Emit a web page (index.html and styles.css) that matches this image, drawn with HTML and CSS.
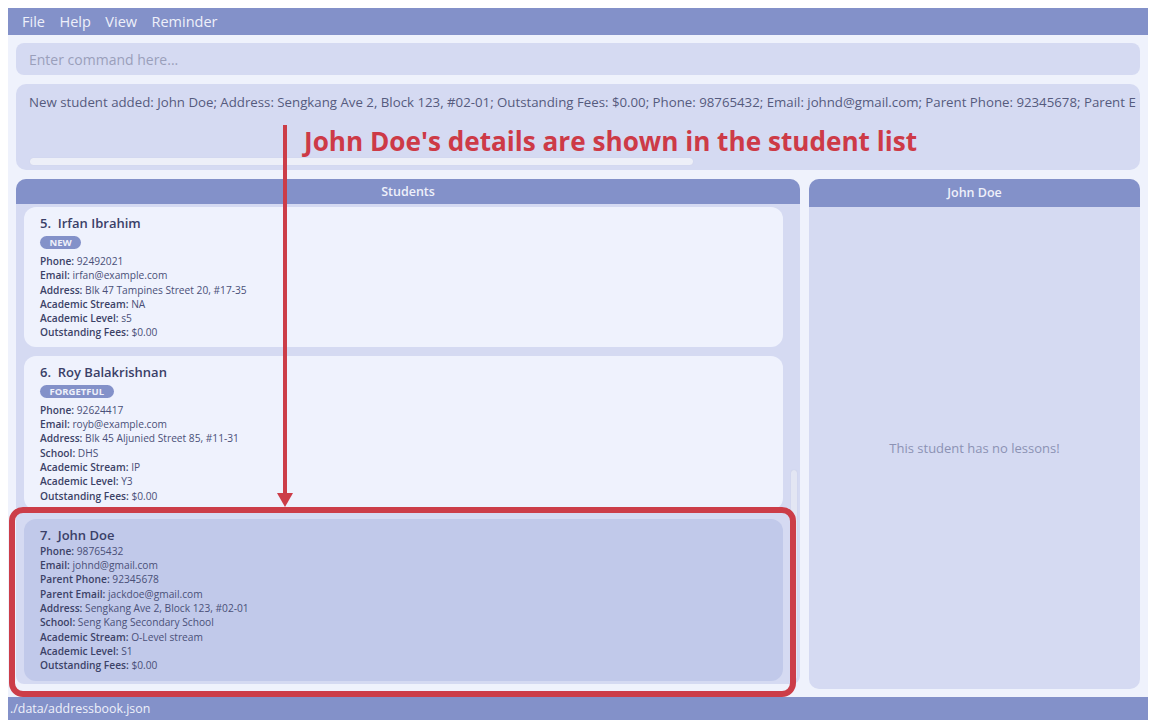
FILE: index.html
```html
<!DOCTYPE html>
<html>
<head>
<meta charset="utf-8">
<link rel="stylesheet" href="styles.css">
</head>
<body>
<div class="app">
  <div class="menubar">
    <span class="menu-item">File</span>
    <span class="menu-item">Help</span>
    <span class="menu-item">View</span>
    <span class="menu-item">Reminder</span>
  </div>
  <div class="main">
    <div class="command">Enter command here...</div>
    <div class="result">
      <div class="result-text">New student added: John Doe; Address: Sengkang Ave 2, Block 123, #02-01; Outstanding Fees: $0.00; Phone: 98765432; Email: johnd@gmail.com; Parent Phone: 92345678; Parent Email: jackdoe@gmail.com</div>
      <div class="hscroll"></div>
    </div>
    <div class="panels">
      <div class="panel students">
        <div class="panel-head">Students</div>
        <div class="list-body">
          <div class="cards">
            <div class="card">
              <div class="card-title">5.&nbsp; Irfan Ibrahim</div>
              <div class="tags"><span class="tag">NEW</span></div>
              <div class="fields">
                <div><b>Phone:</b> 92492021</div>
                <div><b>Email:</b> irfan@example.com</div>
                <div><b>Address:</b> Blk 47 Tampines Street 20, #17-35</div>
                <div><b>Academic Stream:</b> NA</div>
                <div><b>Academic Level:</b> s5</div>
                <div><b>Outstanding Fees:</b> $0.00</div>
              </div>
            </div>
            <div class="card">
              <div class="card-title">6.&nbsp; Roy Balakrishnan</div>
              <div class="tags"><span class="tag">FORGETFUL</span></div>
              <div class="fields">
                <div><b>Phone:</b> 92624417</div>
                <div><b>Email:</b> royb@example.com</div>
                <div><b>Address:</b> Blk 45 Aljunied Street 85, #11-31</div>
                <div><b>School:</b> DHS</div>
                <div><b>Academic Stream:</b> IP</div>
                <div><b>Academic Level:</b> Y3</div>
                <div><b>Outstanding Fees:</b> $0.00</div>
              </div>
            </div>
            <div class="card selected">
              <div class="card-title">7.&nbsp; John Doe</div>
              <div class="fields">
                <div><b>Phone:</b> 98765432</div>
                <div><b>Email:</b> johnd@gmail.com</div>
                <div><b>Parent Phone:</b> 92345678</div>
                <div><b>Parent Email:</b> jackdoe@gmail.com</div>
                <div><b>Address:</b> Sengkang Ave 2, Block 123, #02-01</div>
                <div><b>School:</b> Seng Kang Secondary School</div>
                <div><b>Academic Stream:</b> O-Level stream</div>
                <div><b>Academic Level:</b> S1</div>
                <div><b>Outstanding Fees:</b> $0.00</div>
              </div>
            </div>
          </div>
          <div class="vscroll"><div class="vthumb"></div></div>
        </div>
      </div>
      <div class="panel detail">
        <div class="panel-head detail-head">John Doe</div>
        <div class="detail-body">This student has no lessons!</div>
      </div>
    </div>
  </div>
  <div class="statusbar">./data/addressbook.json</div>
</div>

<div class="anno-box"></div>
<svg class="anno-arrow" width="20" height="390" viewBox="0 0 20 390">
  <rect x="8" y="0" width="4" height="370" fill="#cc3d48"/>
  <polygon points="2,368 18,368 10,382" fill="#cc3d48"/>
</svg>
<div class="anno-text">John Doe's details are shown in the student list</div>
</body>
</html>
```

FILE: styles.css
```css
* { box-sizing: border-box; }
html, body { margin: 0; padding: 0; }
body {
  background: #ffffff;
  padding: 8px;
  width: 1156px;
  height: 728px;
  font-family: "Open Sans", "Noto Sans", sans-serif;
  position: relative;
  overflow: hidden;
}
.app {
  width: 1140px;
  height: 712px;
  background: #eff2fc;
  display: flex;
  flex-direction: column;
}
.menubar {
  height: 27px;
  background: #8391c9;
  display: flex;
  align-items: center;
  padding-left: 14px;
  flex: none;
}
.menu-item {
  color: #eef0fa;
  font-size: 14.5px;
  margin-right: 14.5px;
}
.main {
  flex: 1;
  padding: 8px 8px 0 8px;
  display: flex;
  flex-direction: column;
  min-height: 0;
}
.command {
  height: 32px;
  background: #d5daf2;
  border-radius: 8px;
  color: #9a9fbb;
  font-size: 14px;
  line-height: 33px;
  padding-left: 13px;
  flex: none;
}
.result {
  margin-top: 9px;
  height: 86px;
  background: #d5daf2;
  border-radius: 10px;
  padding: 8px 4px 5px 13px;
  display: flex;
  flex-direction: column;
  justify-content: space-between;
  flex: none;
}
.result-text {
  font-size: 13.25px;
  line-height: 20px;
  color: #555b7e;
  white-space: nowrap;
  overflow: hidden;
}
.hscroll {
  width: 663px;
  height: 7px;
  margin-left: 1px;
  background: #edeff8;
  border-radius: 4px;
  box-shadow: 0 0 1px #c4c8de;
}
.panels {
  margin-top: 9px;
  height: 510px;
  display: flex;
  gap: 9px;
  flex: none;
}
.panel {
  display: flex;
  flex-direction: column;
  background: #d5daf2;
  border-radius: 10px;
  overflow: hidden;
}
.students { width: 784px; border-radius: 10px 10px 8px 8px; height: 505px; }
.detail { flex: 1; }
.panel-head {
  height: 25px;
  background: #8391c9;
  color: #eef0fa;
  font-size: 12.5px;
  font-weight: 600;
  text-align: center;
  line-height: 25px;
  flex: none;
}
.detail-head { height: 28px; line-height: 28px; }
.list-body {
  flex: 1;
  display: flex;
  min-height: 0;
  overflow: hidden;
}
.cards {
  flex: 1;
  padding: 3px 0 0 8px;
  display: flex;
  flex-direction: column;
  gap: 9px;
}
.card {
  background: #eff2fd;
  border-radius: 12px;
  padding: 7px 16px 7px 16px;
  color: #3c4267;
  flex: none;
}
.card.selected {
  background: #c1c9ea;
  padding-bottom: 8px;
}
.card-title {
  font-size: 13px;
  font-weight: 600;
  line-height: 18px;
  color: #3a4068;
}
.tags { margin-top: 4px; height: 13px; display: flex; margin-bottom: 5px; }
.tag {
  background: #8391c9;
  color: #eef0fa;
  font-size: 9.5px;
  font-weight: 700;
  line-height: 13px;
  padding: 0 9.5px;
  border-radius: 7px;
}
.fields {
  font-size: 10.2px;
  line-height: 14.3px;
  color: #4a5078;
}
.fields b { font-weight: 600; color: #3c4267; }
.vscroll {
  width: 17px;
  flex: none;
  padding-left: 8px;
  padding-top: 266px;
}
.vthumb {
  width: 6px;
  height: 210px;
  background: #e3e6f3;
  border-radius: 3px;
  box-shadow: 0 0 1px #b9bed8;
}
.detail-body {
  flex: 1;
  display: flex;
  justify-content: center;
  padding-top: 232px;
  color: #8c92b4;
  font-size: 13px;
}
.statusbar {
  margin-top: 8px;
  height: 23px;
  background: #8391c9;
  color: #eef0fa;
  font-size: 12.4px;
  line-height: 23px;
  padding-left: 2px;
  flex: none;
}
.anno-box {
  position: absolute;
  left: 9px;
  top: 507px;
  width: 787px;
  height: 190px;
  border: 6px solid #cc3d48;
  border-radius: 14px;
}
.anno-arrow {
  position: absolute;
  left: 275px;
  top: 125px;
}
.anno-text {
  position: absolute;
  left: 304px;
  top: 125px;
  font-size: 26.15px;
  line-height: 32px;
  font-weight: 700;
  color: #cd3a47;
  white-space: nowrap;
}
```
